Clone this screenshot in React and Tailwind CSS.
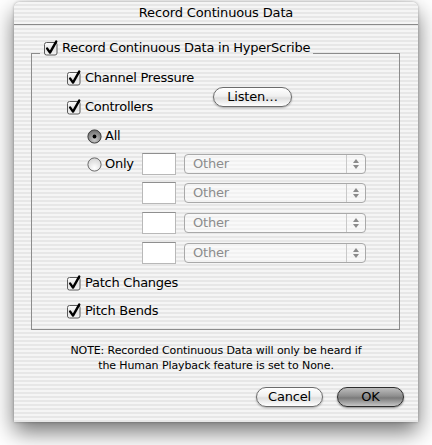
import React from "react";

const font = { fontFamily: '"DejaVu Sans", sans-serif' };

const Check = () => (
  <svg width="16" height="16" viewBox="0 0 16 16" className="shrink-0">
    <defs>
      <linearGradient id="cbg" x1="0" y1="0" x2="0" y2="1">
        <stop offset="0" stopColor="#ffffff" />
        <stop offset="0.5" stopColor="#e4e4e4" />
        <stop offset="1" stopColor="#f4f4f4" />
      </linearGradient>
    </defs>
    <rect x="1.5" y="2.5" width="12.5" height="12.5" rx="2" fill="url(#cbg)" stroke="#5a5a5a" />
    <path d="M4.2 8.6 L7 12.6 L13.2 1.6" stroke="#000" strokeWidth="2.4" fill="none" strokeLinecap="round" strokeLinejoin="round" />
  </svg>
);

const Radio = ({ on }) => (
  <svg width="15" height="15" viewBox="0 0 15 15" className="shrink-0">
    <defs>
      <radialGradient id="rw" cx="0.5" cy="0.75" r="0.7">
        <stop offset="0" stopColor="#ffffff" />
        <stop offset="1" stopColor="#d6d6d6" />
      </radialGradient>
      <radialGradient id="rd" cx="0.5" cy="0.75" r="0.7">
        <stop offset="0" stopColor="#c9c9c9" />
        <stop offset="1" stopColor="#6f6f6f" />
      </radialGradient>
    </defs>
    <circle cx="7.5" cy="7.5" r="6.6" fill={on ? "url(#rd)" : "url(#rw)"} stroke={on ? "#3c3c3c" : "#6a6a6a"} />
    {on && <circle cx="7.5" cy="7.5" r="1.9" fill="#000" />}
  </svg>
);

const Popup = () => (
  <div className="ml-[8px] flex h-[20px] w-[182px] items-center rounded-[4px] border border-[#a9a9a9] bg-[rgba(255,255,255,0.45)]">
    <span className="flex-1 pl-[8px] text-[13px] tracking-[-0.2px] text-[#8c8c8c]">Other</span>
    <div className="flex h-full w-[19px] flex-col items-center justify-center gap-[2px] border-l border-[#c9c9c9]">
      <svg width="6" height="4" viewBox="0 0 6 4"><path d="M3 0 L6 4 L0 4 Z" fill="#8a8a8a" /></svg>
      <svg width="6" height="4" viewBox="0 0 6 4"><path d="M0 0 L6 0 L3 4 Z" fill="#8a8a8a" /></svg>
    </div>
  </div>
);

const Field = () => (
  <div className="h-[22px] w-[34px] border border-[#b8b8b8] border-t-[#8f8f8f] bg-white" />
);

const PillButton = ({ children, w, dark }) => (
  <div
    className={
      "flex h-[20px] items-center justify-center rounded-full text-[13px] tracking-[-0.2px] text-black " +
      (dark
        ? "border border-[#2e2e2e] bg-[linear-gradient(to_bottom,#bdbdbd_0%,#8e8e8e_45%,#7a7a7a_55%,#c6c6c6_100%)] shadow-[0_1px_2px_rgba(0,0,0,0.45)]"
        : "border border-[#6c6c6c] bg-[linear-gradient(to_bottom,#ffffff_0%,#f0f0f0_45%,#dedede_55%,#ffffff_100%)] shadow-[0_1px_2px_rgba(0,0,0,0.3)]")
    }
    style={{ width: w }}
  >
    {children}
  </div>
);

export default function App() {
  return (
    <div className="min-h-[445px] w-[432px] bg-white pt-[2px]" style={font}>
      <div className="ml-[14px] flex h-[420px] w-[404px] flex-col rounded-t-[6px] bg-[repeating-linear-gradient(to_bottom,#f5f5f5_0px,#f5f5f5_2px,#e7e7e7_2px,#e7e7e7_4px)] shadow-[0_10px_22px_rgba(0,0,0,0.55),0_0_3px_rgba(0,0,0,0.3)]">
        <div className="flex h-[23px] shrink-0 items-center justify-center border-b border-[#8a8a8a] text-[13px] tracking-[-0.15px] text-black">
          Record Continuous Data
        </div>

        <fieldset className="ml-[17px] mt-[15px] w-[369px] border border-[#8c8c8c] pb-[4px] tracking-[-0.25px]">
          <legend className="ml-[8px] flex h-[26px] items-start px-[3px]">
            <div className="flex h-[16px] items-center gap-[3px] text-[13px] leading-[16px]">
              <Check />
              <span>Record Continuous Data in HyperScribe</span>
            </div>
          </legend>

          <div className="-mt-[2px] flex">
            <div className="flex w-[181px] flex-col pl-[34px]">
              <div className="flex h-[28px] items-center gap-[3px] text-[13px]">
                <Check />
                <span>Channel Pressure</span>
              </div>
              <div className="flex h-[30px] items-center gap-[3px] text-[13px]">
                <Check />
                <span>Controllers</span>
              </div>
            </div>
            <div className="mt-[23px]">
              <PillButton w={79}>Listen…</PillButton>
            </div>
          </div>

          <div className="flex flex-col pl-[55px]">
            <div className="flex h-[28px] items-center gap-[3px] text-[13px]">
              <Radio on />
              <span>All</span>
            </div>
            <div className="flex h-[28px] items-center text-[13px]">
              <Radio />
              <span className="ml-[3px] w-[37px]">Only</span>
              <Field />
              <Popup />
            </div>
            {[0, 1, 2].map((i) => (
              <div key={i} className="flex h-[30px] items-center pl-[55px]">
                <Field />
                <Popup />
              </div>
            ))}
          </div>

          <div className="mt-[1px] flex flex-col pl-[34px]">
            <div className="flex h-[28px] items-center gap-[3px] text-[13px]">
              <Check />
              <span>Patch Changes</span>
            </div>
            <div className="flex h-[28px] items-center gap-[3px] text-[13px]">
              <Check />
              <span>Pitch Bends</span>
            </div>
          </div>
        </fieldset>

        <div className="mt-[13px] text-center text-[11px] leading-[15px] tracking-[-0.1px] text-black">
          NOTE: Recorded Continuous Data will only be heard if
          <br />
          the Human Playback feature is set to None.
        </div>

        <div className="mt-auto mb-[15px] flex justify-end gap-[14px] pr-[14px]">
          <PillButton w={67}>Cancel</PillButton>
          <PillButton w={67} dark>OK</PillButton>
        </div>
      </div>
    </div>
  );
}
